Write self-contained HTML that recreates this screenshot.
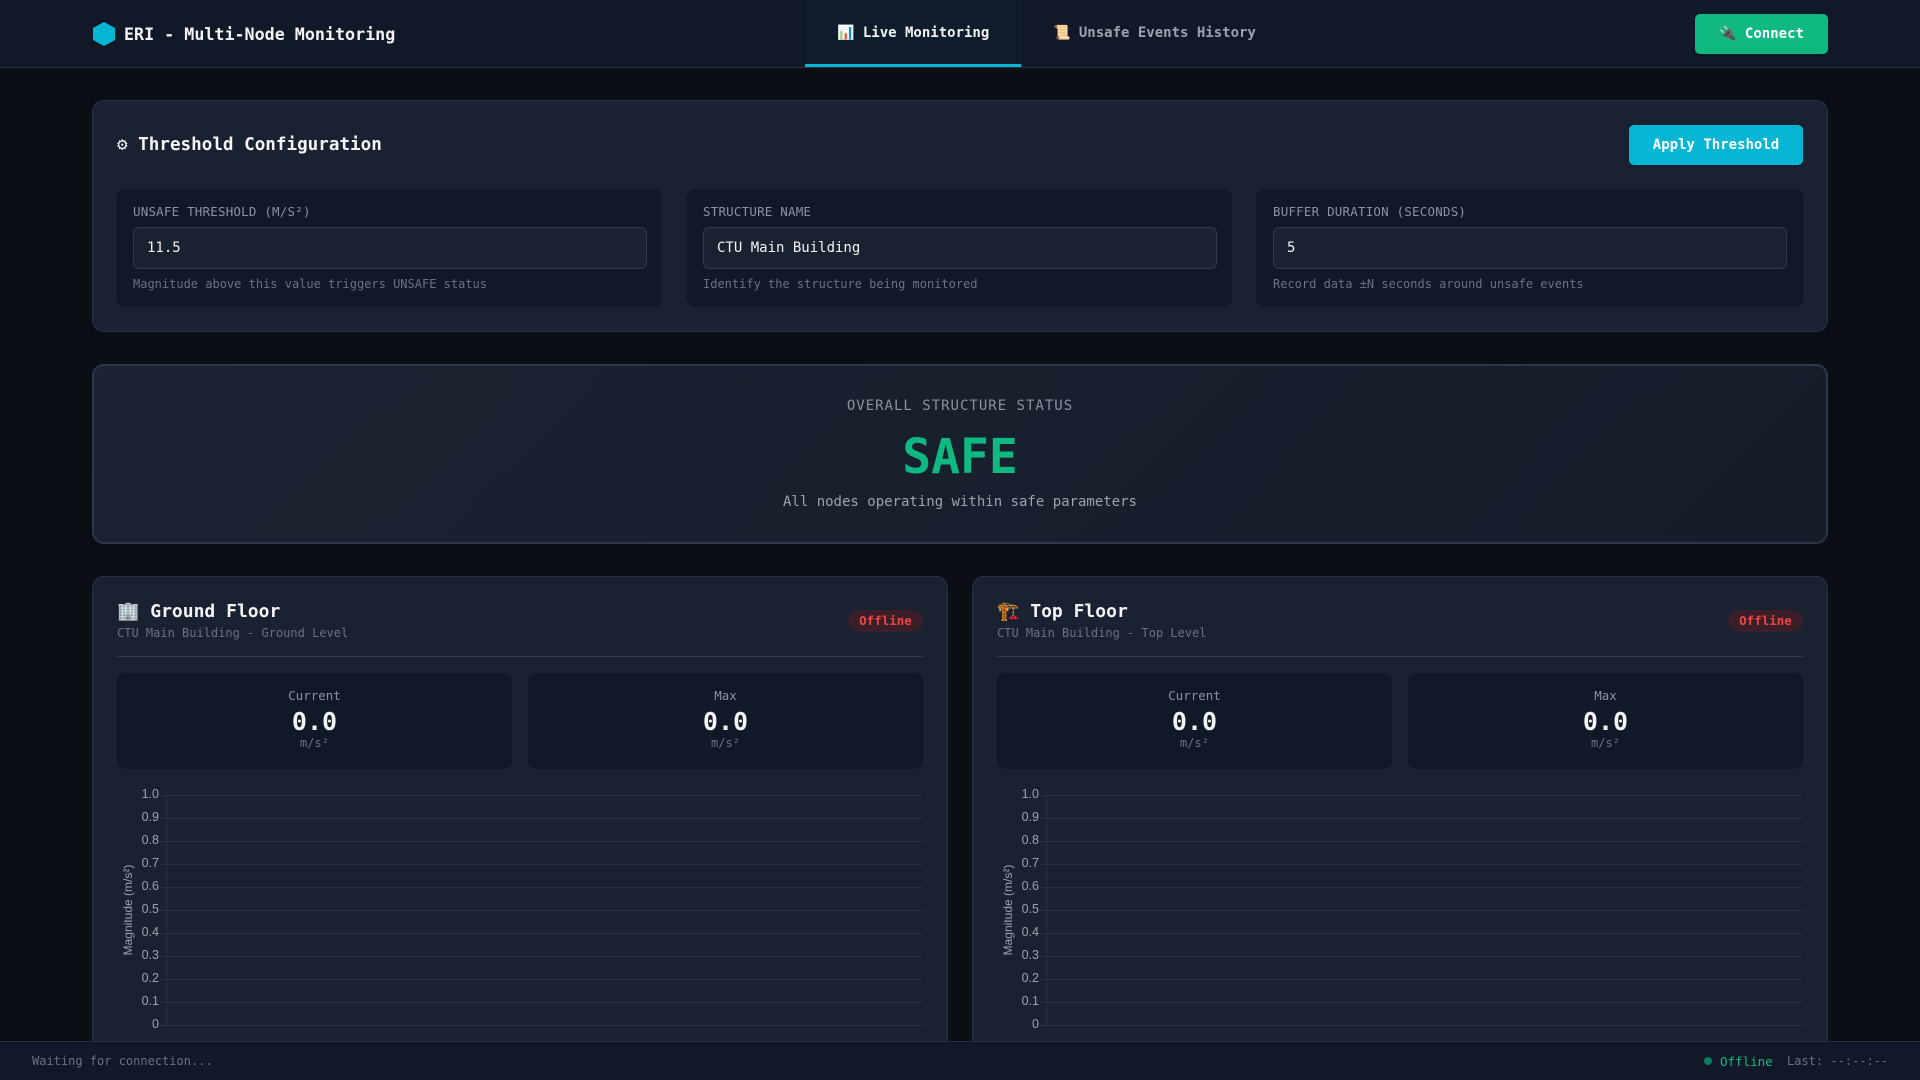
<!DOCTYPE html>
<html style="overflow:hidden;width:1920px;height:1080px"><head><meta charset="utf-8"><style>
*{box-sizing:border-box;margin:0;padding:0}
body{width:1920px;height:1080px;overflow:hidden;background:#0a0e15;font-family:"DejaVu Sans Mono","Liberation Mono",monospace;color:#e5e7eb;position:relative}
.a{position:absolute}
.hdr{left:0;top:0;width:1920px;height:68px;background:#111827;border-bottom:1px solid #2a3343}
.card{background:#1a2231;border:1px solid #2a3343;border-radius:12px}
.inner{background:#111827;border-radius:8px}
.lbl{font-size:12.5px;color:#8b93a1;letter-spacing:.2px}
.inp{background:#1a2231;border:1px solid #2f3a4b;border-radius:6px;height:42px;font-size:14px;color:#f3f4f6;padding:12px 13px}
.help{font-size:12px;color:#6b7280}
.grid{left:0;height:1px;background:#283244}
.tk{font-family:"Liberation Sans",sans-serif;font-size:12.5px;color:#9ca3af;text-align:right;width:42px}
.ylab{left:-59px;top:123px;width:140px;transform:rotate(-90deg);font-family:'Liberation Sans',sans-serif;font-size:12px;color:#9ca3af;text-align:center}
</style></head><body>
<div class="a hdr"></div>
<svg class="a" style="left:92px;top:21px" width="24" height="26" viewBox="0 0 24 26"><polygon points="12,1 23,7 23,19 12,25 1,19 1,7" fill="#06b6d4"/></svg>
<div class="a" style="left:124px;top:24px;font-size:16.7px;font-weight:bold;color:#f3f4f6">ERI - Multi-Node Monitoring</div>
<div class="a" style="left:805px;top:0;width:216px;height:67px;background:#0f1c2b;border-bottom:3px solid #06b6d4"></div>
<div class="a" style="left:837px;top:25px;font-size:14px;font-weight:bold;color:#f3f4f6">📊 Live Monitoring</div>
<div class="a" style="left:1053px;top:25px;font-size:14px;font-weight:bold;color:#9ca3af">📜 Unsafe Events History</div>
<div class="a" style="left:1695px;top:14px;width:133px;height:40px;background:#10b981;border-radius:5px;color:#fff;font-size:14px;font-weight:bold;text-align:center;line-height:40px">🔌 Connect</div>

<div class="a card" style="left:92px;top:100px;width:1736px;height:232px"></div>
<div class="a" style="left:117px;top:135px;font-size:17.6px;font-weight:bold;color:#f3f4f6">⚙ Threshold Configuration</div>
<div class="a" style="left:1629px;top:125px;width:174px;height:40px;background:#06b6d4;border-radius:5px;color:#fff;font-size:14px;font-weight:bold;text-align:center;line-height:40px">Apply Threshold</div>

<div class="a inner" style="left:117px;top:189px;width:545px;height:118px"></div>
<div class="a lbl" style="left:133px;top:204px">UNSAFE THRESHOLD (M/S²)</div>
<div class="a inp" style="left:133px;top:227px;width:514px">11.5</div>
<div class="a help" style="left:133px;top:277px">Magnitude above this value triggers UNSAFE status</div>

<div class="a inner" style="left:687px;top:189px;width:545px;height:118px"></div>
<div class="a lbl" style="left:703px;top:204px">STRUCTURE NAME</div>
<div class="a inp" style="left:703px;top:227px;width:514px">CTU Main Building</div>
<div class="a help" style="left:703px;top:277px">Identify the structure being monitored</div>

<div class="a inner" style="left:1256px;top:189px;width:547px;height:118px"></div>
<div class="a lbl" style="left:1273px;top:204px">BUFFER DURATION (SECONDS)</div>
<div class="a inp" style="left:1273px;top:227px;width:514px">5</div>
<div class="a help" style="left:1273px;top:277px">Record data ±N seconds around unsafe events</div>

<div class="a" style="left:92px;top:364px;width:1736px;height:180px;background:linear-gradient(135deg,#1b2332,#151c2a);border:2px solid #2d3748;border-radius:12px"></div>
<div class="a" style="left:0;width:1920px;top:398px;text-align:center;font-size:14px;letter-spacing:1px;color:#8b93a1">OVERALL STRUCTURE STATUS</div>
<div class="a" style="left:0;width:1920px;top:429px;text-align:center;font-size:48px;font-weight:bold;color:#10b981">SAFE</div>
<div class="a" style="left:0;width:1920px;top:494px;text-align:center;font-size:14px;color:#9ca3af">All nodes operating within safe parameters</div>

<div class="a card" style="left:92px;top:576px;width:856px;height:510px"></div>
<div class="a card" style="left:972px;top:576px;width:856px;height:510px"></div>

<div class="a" style="left:117px;top:601px;font-size:18px;font-weight:bold;color:#f3f4f6">🏢 Ground Floor</div>
<div class="a help" style="left:117px;top:626px">CTU Main Building - Ground Level</div>
<div class="a" style="left:848px;top:610px;width:75px;height:22px;border-radius:11px;background:#3a1f28;color:#ef4444;font-size:12.5px;font-weight:bold;text-align:center;line-height:22px">Offline</div>
<div class="a" style="left:117px;top:656px;width:806px;height:1px;background:#2f3a4b"></div>

<div class="a" style="left:997px;top:601px;font-size:18px;font-weight:bold;color:#f3f4f6">🏗️ Top Floor</div>
<div class="a help" style="left:997px;top:626px">CTU Main Building - Top Level</div>
<div class="a" style="left:1728px;top:610px;width:75px;height:22px;border-radius:11px;background:#3a1f28;color:#ef4444;font-size:12.5px;font-weight:bold;text-align:center;line-height:22px">Offline</div>
<div class="a" style="left:997px;top:656px;width:806px;height:1px;background:#2f3a4b"></div>

<div class="a inner" style="left:117px;top:673px;width:395px;height:96px;text-align:center"><div style="font-size:12.5px;color:#8b93a1;margin-top:15px">Current</div><div style="font-size:25px;font-weight:bold;color:#f3f4f6;margin-top:4px">0.0</div><div style="font-size:12px;color:#6b7280;margin-top:0px">m/s²</div></div>
<div class="a inner" style="left:528px;top:673px;width:395px;height:96px;text-align:center"><div style="font-size:12.5px;color:#8b93a1;margin-top:15px">Max</div><div style="font-size:25px;font-weight:bold;color:#f3f4f6;margin-top:4px">0.0</div><div style="font-size:12px;color:#6b7280;margin-top:0px">m/s²</div></div>
<div class="a inner" style="left:997px;top:673px;width:395px;height:96px;text-align:center"><div style="font-size:12.5px;color:#8b93a1;margin-top:15px">Current</div><div style="font-size:25px;font-weight:bold;color:#f3f4f6;margin-top:4px">0.0</div><div style="font-size:12px;color:#6b7280;margin-top:0px">m/s²</div></div>
<div class="a inner" style="left:1408px;top:673px;width:395px;height:96px;text-align:center"><div style="font-size:12.5px;color:#8b93a1;margin-top:15px">Max</div><div style="font-size:25px;font-weight:bold;color:#f3f4f6;margin-top:4px">0.0</div><div style="font-size:12px;color:#6b7280;margin-top:0px">m/s²</div></div>

<div class="a" style="left:117px;top:780px;width:810px;height:260px">
 <div class="a" style="left:49px;top:15px;width:1px;height:230px;background:#283244"></div>
 <div class="a ylab">Magnitude (m/s²)</div>
 <div class="a grid" style="left:43px;width:763px;top:15px"></div><div class="a tk" style="left:0;top:7px">1.0</div>
 <div class="a grid" style="left:43px;width:763px;top:38px"></div><div class="a tk" style="left:0;top:30px">0.9</div>
 <div class="a grid" style="left:43px;width:763px;top:61px"></div><div class="a tk" style="left:0;top:53px">0.8</div>
 <div class="a grid" style="left:43px;width:763px;top:84px"></div><div class="a tk" style="left:0;top:76px">0.7</div>
 <div class="a grid" style="left:43px;width:763px;top:107px"></div><div class="a tk" style="left:0;top:99px">0.6</div>
 <div class="a grid" style="left:43px;width:763px;top:130px"></div><div class="a tk" style="left:0;top:122px">0.5</div>
 <div class="a grid" style="left:43px;width:763px;top:153px"></div><div class="a tk" style="left:0;top:145px">0.4</div>
 <div class="a grid" style="left:43px;width:763px;top:176px"></div><div class="a tk" style="left:0;top:168px">0.3</div>
 <div class="a grid" style="left:43px;width:763px;top:199px"></div><div class="a tk" style="left:0;top:191px">0.2</div>
 <div class="a grid" style="left:43px;width:763px;top:222px"></div><div class="a tk" style="left:0;top:214px">0.1</div>
 <div class="a grid" style="left:43px;width:763px;top:245px"></div><div class="a tk" style="left:0;top:237px">0</div>
</div>
<div class="a" style="left:997px;top:780px;width:810px;height:260px">
 <div class="a" style="left:49px;top:15px;width:1px;height:230px;background:#283244"></div>
 <div class="a ylab">Magnitude (m/s²)</div>
 <div class="a grid" style="left:43px;width:763px;top:15px"></div><div class="a tk" style="left:0;top:7px">1.0</div>
 <div class="a grid" style="left:43px;width:763px;top:38px"></div><div class="a tk" style="left:0;top:30px">0.9</div>
 <div class="a grid" style="left:43px;width:763px;top:61px"></div><div class="a tk" style="left:0;top:53px">0.8</div>
 <div class="a grid" style="left:43px;width:763px;top:84px"></div><div class="a tk" style="left:0;top:76px">0.7</div>
 <div class="a grid" style="left:43px;width:763px;top:107px"></div><div class="a tk" style="left:0;top:99px">0.6</div>
 <div class="a grid" style="left:43px;width:763px;top:130px"></div><div class="a tk" style="left:0;top:122px">0.5</div>
 <div class="a grid" style="left:43px;width:763px;top:153px"></div><div class="a tk" style="left:0;top:145px">0.4</div>
 <div class="a grid" style="left:43px;width:763px;top:176px"></div><div class="a tk" style="left:0;top:168px">0.3</div>
 <div class="a grid" style="left:43px;width:763px;top:199px"></div><div class="a tk" style="left:0;top:191px">0.2</div>
 <div class="a grid" style="left:43px;width:763px;top:222px"></div><div class="a tk" style="left:0;top:214px">0.1</div>
 <div class="a grid" style="left:43px;width:763px;top:245px"></div><div class="a tk" style="left:0;top:237px">0</div>
</div>

<div class="a" style="left:0;top:1041px;width:1920px;height:39px;background:#111827;border-top:1px solid #2a3343"></div>
<div class="a" style="left:32px;top:1054px;font-size:12px;color:#6b7280">Waiting for connection...</div>
<div class="a" style="left:1704px;top:1057px;width:8px;height:8px;border-radius:50%;background:#0f7a5a"></div>
<div class="a" style="left:1720px;top:1054px;font-size:12.5px;color:#10b981">Offline</div>
<div class="a" style="left:1787px;top:1054px;font-size:12px;color:#6b7280">Last: --:--:--</div>
</body></html>
